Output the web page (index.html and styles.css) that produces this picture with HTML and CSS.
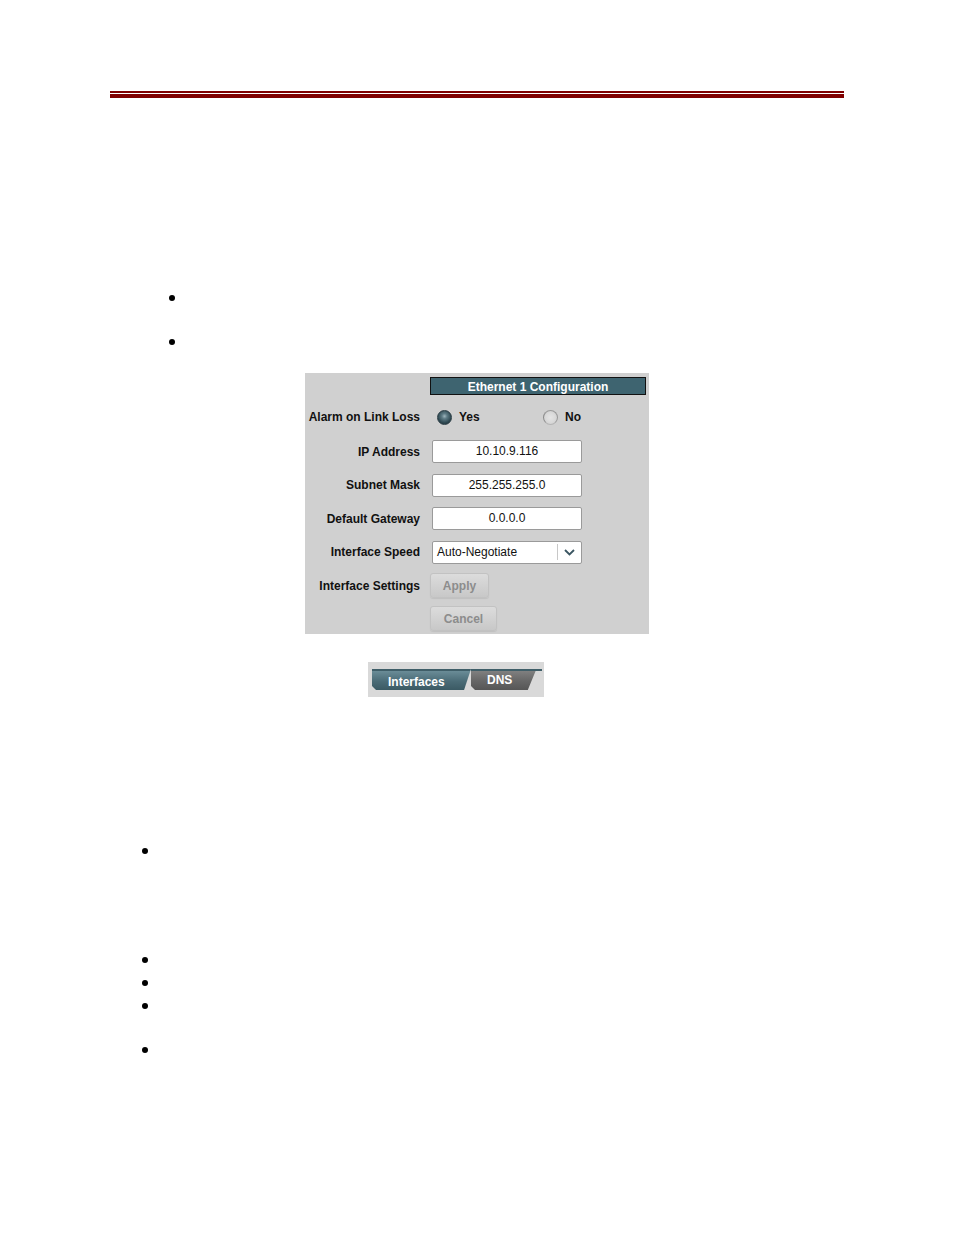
FILE: index.html
```html
<!DOCTYPE html>
<html>
<head>
<meta charset="utf-8">
<title>Ethernet Configuration</title>
<link rel="stylesheet" href="styles.css">
</head>
<body>
<div class="rule"></div>

<ul class="bullets bullets-top">
  <li>&nbsp;</li>
  <li>&nbsp;</li>
</ul>

<div class="panel">
  <div class="panel-title">Ethernet 1 Configuration</div>

  <div class="label label-alarm">Alarm on Link Loss</div>
  <div class="field field-alarm">
    <div class="radio-opt"><span class="radio radio-on"></span><span>Yes</span></div>
    <div class="radio-opt"><span class="radio radio-off"></span><span>No</span></div>
  </div>

  <div class="label">IP Address</div>
  <div class="field"><div class="input">10.10.9.116</div></div>

  <div class="label">Subnet Mask</div>
  <div class="field"><div class="input">255.255.255.0</div></div>

  <div class="label">Default Gateway</div>
  <div class="field"><div class="input">0.0.0.0</div></div>

  <div class="label">Interface Speed</div>
  <div class="field">
    <div class="select">
      <span class="select-text">Auto-Negotiate</span>
      <span class="select-div"></span>
      <svg class="chev" width="11" height="7" viewBox="0 0 11 7"><polyline points="1,1 5.5,5.5 10,1" fill="none" stroke="#3b5662" stroke-width="1.8"/></svg>
    </div>
  </div>

  <div class="label">Interface Settings</div>
  <div class="field"><div class="btn btn-apply">Apply</div></div>

  <div class="label"></div>
  <div class="field"><div class="btn btn-cancel">Cancel</div></div>
</div>

<div class="tabstrip">
  <div class="tab tab-active">Interfaces</div>
  <div class="tab tab-dns">DNS</div>
</div>

<ul class="bullets bullets-bottom">
  <li>&nbsp;</li>
  <li class="far">&nbsp;</li>
  <li>&nbsp;</li>
  <li>&nbsp;</li>
  <li class="mid">&nbsp;</li>
</ul>
</body>
</html>
```

FILE: styles.css
```css
html, body {
  margin: 0;
  padding: 0;
  background: #ffffff;
  font-family: "Liberation Serif", "Times New Roman", serif;
}

.rule {
  margin: 91px 0 0 110px;
  width: 734px;
  height: 1px;
  border-top: 2px solid #800000;
  border-bottom: 4px solid #800000;
}

.bullets {
  list-style: none;
  margin: 0;
  padding: 0;
}

.bullets li {
  display: flex;
  align-items: center;
  height: 23px;
  font-size: 16px;
}

.bullets li::before {
  content: "";
  width: 6px;
  height: 6px;
  border-radius: 50%;
  background: #000;
  flex: none;
}

.bullets-top {
  margin-top: 188px;
}

.bullets-top li + li {
  margin-top: 21px;
}

.bullets-top li::before {
  margin-left: 169px;
}

.bullets-bottom {
  margin-top: 142px;
}

.bullets-bottom li::before {
  margin-left: 142px;
}

.bullets-bottom li.far {
  margin-top: 86px;
}

.bullets-bottom li.mid {
  margin-top: 21px;
}

/* Panel */
.panel {
  margin: 20px 0 0 305px;
  width: 344px;
  height: 261px;
  box-sizing: border-box;
  padding-top: 4px;
  background: #d0d0d0;
  display: grid;
  grid-template-columns: 125px 219px;
  grid-template-rows: 18px 40px repeat(5, 33.5px) 32px;
  font-family: "Liberation Sans", Arial, sans-serif;
  font-size: 12px;
  overflow: hidden;
}

.panel-title {
  grid-column: 2;
  width: 216px;
  height: 18px;
  box-sizing: border-box;
  background: #3e6470;
  border: 1px solid #111;
  color: #fff;
  font-weight: bold;
  text-align: center;
  padding-top: 1px;
  line-height: 16px;
}

.label {
  grid-column: 1;
  display: flex;
  align-items: center;
  justify-content: flex-end;
  padding-right: 10px;
  font-weight: bold;
  color: #111;
}

.label-alarm,
.field-alarm {
  padding-top: 4px;
}

.field {
  grid-column: 2;
  display: flex;
  align-items: center;
}

.field-alarm {
  padding-left: 7px;
  font-weight: bold;
  color: #111;
}

.radio-opt {
  display: flex;
  align-items: center;
  gap: 7px;
  width: 108px;
}

.radio {
  width: 15px;
  height: 15px;
  border-radius: 50%;
  box-sizing: border-box;
  flex: none;
}

.radio-on {
  background: radial-gradient(circle at 50% 40%, #9fb6bd 0, #5f7c86 25%, #2e4851 65%, #1f3139 100%);
  border: 1px solid #2a3c44;
}

.radio-off {
  background: radial-gradient(circle at 50% 50%, #e4e4e4 0, #dadada 50%, #c9c9c9 100%);
  border: 1px solid #9a9a9a;
  border-left-color: #8a8a8a;
  border-bottom-color: #b5b5b5;
}

.input {
  margin-left: 2px;
  width: 150px;
  height: 23px;
  box-sizing: border-box;
  background: #fff;
  border: 1px solid #9a9a9a;
  border-radius: 2px;
  text-align: center;
  line-height: 21px;
  color: #111;
}

.select {
  margin-left: 2px;
  width: 150px;
  height: 23px;
  box-sizing: border-box;
  background: #fff;
  border: 1px solid #9a9a9a;
  border-radius: 2px;
  display: flex;
  align-items: center;
  color: #111;
}

.select-text {
  flex: 1;
  padding-left: 4px;
}

.select-div {
  width: 1px;
  height: 16px;
  background: #c8c8c8;
}

.chev {
  margin: 1px 6px 0 6px;
}

.btn {
  height: 25px;
  box-sizing: border-box;
  border: 1px solid #c2c2c2;
  border-radius: 3px;
  background: linear-gradient(#dcdcdc, #c8c8c8);
  color: #8c8c8c;
  font-weight: bold;
  display: flex;
  align-items: center;
  justify-content: center;
  box-shadow: 0 1px 1px rgba(0,0,0,0.08);
}

.btn-apply {
  width: 59px;
}

.btn-cancel {
  width: 67px;
}

/* Tabs */
.tabstrip {
  margin: 28px 0 0 368px;
  width: 176px;
  height: 35px;
  box-sizing: border-box;
  background: #d9d9d9;
  padding: 7px 0 0 4px;
  display: flex;
  align-items: flex-start;
  font-family: "Liberation Sans", Arial, sans-serif;
  font-size: 12px;
  font-weight: bold;
  color: #fff;
}

.tab {
  height: 21px;
  box-sizing: border-box;
  border-top: 2px solid #3f5e68;
}

.tab-active {
  width: 99px;
  background: linear-gradient(#6a8c97, #4a6b76 55%, #3b5a64);
  clip-path: polygon(0 0, 100% 0, 93% 100%, 4px 100%, 0 calc(100% - 4px));
  border-bottom-left-radius: 4px;
  padding: 4px 0 0 16px;
}

.tab-dns {
  width: 71px;
  background: linear-gradient(to right, #3f5e68, #3f5e68) top / 100% 2px no-repeat, linear-gradient(#858585, #676767 55%, #565656);
  border-top: 0;
  padding: 4px 0 0 16px;
  clip-path: polygon(0 0, 100% 0, 100% 2px, 91% 2px, 80% 100%, 4px 100%, 0 calc(100% - 4px));
}
```
